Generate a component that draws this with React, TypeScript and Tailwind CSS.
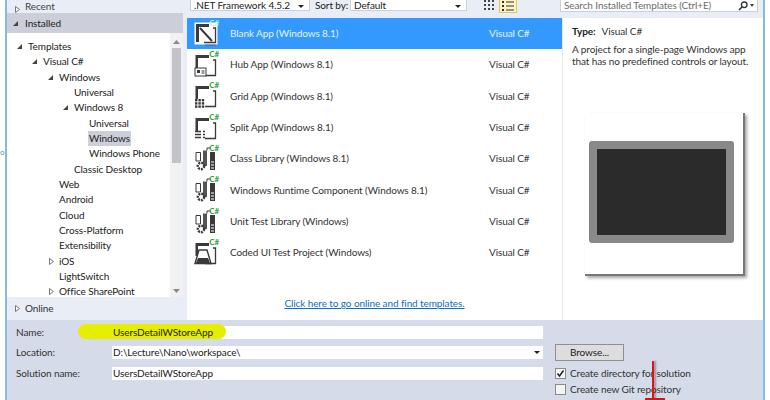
import type { ReactNode } from "react";

const FONT = "font-['Lato','Open_Sans',sans-serif]";

const tree: { label: string; indent: number; arrow?: "open" | "closed"; selected?: boolean }[] = [
  { label: "Templates", indent: 28, arrow: "open" },
  { label: "Visual C#", indent: 43, arrow: "open" },
  { label: "Windows", indent: 59, arrow: "open" },
  { label: "Universal", indent: 74 },
  { label: "Windows 8", indent: 74, arrow: "open" },
  { label: "Universal", indent: 89 },
  { label: "Windows", indent: 89, selected: true },
  { label: "Windows Phone", indent: 89 },
  { label: "Classic Desktop", indent: 74 },
  { label: "Web", indent: 59 },
  { label: "Android", indent: 59 },
  { label: "Cloud", indent: 59 },
  { label: "Cross-Platform", indent: 59 },
  { label: "Extensibility", indent: 59 },
  { label: "iOS", indent: 59, arrow: "closed" },
  { label: "LightSwitch", indent: 59 },
  { label: "Office SharePoint", indent: 59, arrow: "closed" },
];

const templates: { name: string; icon: IconKind }[] = [
  { name: "Blank App (Windows 8.1)", icon: "blank" },
  { name: "Hub App (Windows 8.1)", icon: "hub" },
  { name: "Grid App (Windows 8.1)", icon: "grid" },
  { name: "Split App (Windows 8.1)", icon: "split" },
  { name: "Class Library (Windows 8.1)", icon: "lib" },
  { name: "Windows Runtime Component (Windows 8.1)", icon: "lib" },
  { name: "Unit Test Library (Windows)", icon: "lib" },
  { name: "Coded UI Test Project (Windows)", icon: "test" },
];

type IconKind = "blank" | "hub" | "grid" | "split" | "lib" | "test";

function Arrow({ open }: { open?: boolean }) {
  return (
    <svg width="7" height="7" viewBox="0 0 7 7" className="shrink-0">
      {open ? (
        <path d="M6 1V6H1Z" fill="#444" />
      ) : (
        <path d="M1.5 .5L5.5 3.5L1.5 6.5Z" fill="#fff" stroke="#777" />
      )}
    </svg>
  );
}

function TemplateIcon({ kind, selected }: { kind: IconKind; selected?: boolean }) {
  const dark = "#3a3a3a";
  let body: ReactNode;
  if (kind === "lib") {
    body = (
      <g>
        <path d="M2 5.5H6.5V14H2Z" fill="#fff" stroke={dark} />
        <path d="M9 3.5H13V19H9Z" fill="#555" />
        <path d="M16 5H21V23H16Z" fill={dark} />
        <path d="M17 15H20M17 18H20M17 21H20" stroke="#fff" />
        <circle cx="7" cy="19" r="3.2" fill="none" stroke={dark} strokeWidth="2.4" strokeDasharray="2 1" />
        <path d="M13 3.5V1H17" fill="none" stroke={dark} />
      </g>
    );
  } else {
    body = (
      <g>
        <path d="M1.5 2H15V5H4V15H1.5Z" fill={dark} />
        <path d="M19 7H21.5V22.5H11" fill="none" stroke={dark} strokeWidth="1.3" />
        {kind === "blank" && (
          <g>
            <rect x="0.5" y="0.5" width="23" height="22" fill="#fff" />
            <path d="M2 2H15V5H5V20H2Z" fill={dark} />
            <path d="M19 6H21.5V20.5H10" fill="none" stroke={dark} strokeWidth="1.3" />
            <path d="M6 6L18 19" stroke={dark} strokeWidth="2" />
          </g>
        )}
        {kind === "hub" && (
          <g>
            <rect x="1" y="15" width="11" height="8" fill="#fff" stroke={dark} />
            <rect x="3" y="17" width="3" height="3" fill={dark} />
            <path d="M7.5 18H10.5M7.5 20H10.5" stroke={dark} />
          </g>
        )}
        {kind === "grid" && (
          <g fill={dark}>
            {[0, 1, 2].map((r) =>
              [0, 1, 2].map((c) => <rect key={`${r}${c}`} x={1 + c * 3.4} y={15 + r * 3.2} width="2.4" height="2.4" />)
            )}
          </g>
        )}
        {kind === "split" && (
          <path d="M1 15.5H7M9 15.5H11M1 18.5H7M9 18.5H11M1 21.5H7M9 21.5H11" stroke={dark} strokeWidth="1.3" />
        )}
        {kind === "test" && (
          <g>
            <path d="M5 9H13L17 22.5H1Z" fill="#fff" stroke={dark} strokeWidth="1.4" />
            <path d="M4 17H14L16 22H2Z" fill={dark} />
          </g>
        )}
      </g>
    );
  }
  return (
    <div className="relative w-[26px] h-[26px] shrink-0">
      <svg width="24" height="24" viewBox="0 0 24 24" className="mt-px">
        {body}
      </svg>
      <span className={`absolute -top-[3px] right-[1px] text-[8px] leading-[10px] font-bold ${selected ? "text-[#c8f5cc]" : "text-[#2f9e3f]"}`}>
        C#
      </span>
    </div>
  );
}

function Scrollbar() {
  return (
    <div className="w-[13px] shrink-0 bg-[#f1f1f3] flex flex-col items-center">
      <svg width="9" height="6" viewBox="0 0 9 6" className="mt-[6px] shrink-0">
        <path d="M1 5L4.5 1L8 5Z" fill="#8a8a8a" />
      </svg>
      <div className="w-[9px] h-[115px] mt-[3px] bg-[#c2c3c9]" />
      <svg width="9" height="6" viewBox="0 0 9 6" className="mt-auto mb-[3px] shrink-0">
        <path d="M1 1L4.5 5L8 1Z" fill="#8a8a8a" />
      </svg>
    </div>
  );
}

function LeftPanel() {
  return (
    <div className="w-[180px] shrink-0 flex flex-col bg-[#e9edf6] whitespace-nowrap">
      <div className="h-[13px] flex items-end pl-[7px] gap-[4px] text-[#444] overflow-hidden">
        <Arrow />
        <span className="leading-[13px]">Recent</span>
      </div>
      <div className="h-[20px] mr-[4px] bg-[#ccced9] flex items-center pl-[5px] gap-[6px] text-[#222]">
        <Arrow open />
        <span>Installed</span>
      </div>
      <div className="h-[264px] mr-[4px] flex bg-white overflow-hidden">
        <div className="flex-1 pt-[6px] overflow-hidden">
          {tree.map((t, i) => (
            <div key={i} className="relative h-[15.33px] flex items-center" style={{ paddingLeft: t.indent - 8 }}>
              {t.arrow && (
                <span className="absolute top-[4px]" style={{ left: t.indent - (t.arrow === "closed" ? 18 : 19) }}>
                  <Arrow open={t.arrow === "open"} />
                </span>
              )}
              <span className={`px-[1px] leading-[15px] text-[#222] ${t.selected ? "bg-[#ccced9]" : ""}`}>{t.label}</span>
            </div>
          ))}
        </div>
        <Scrollbar />
      </div>
      <div className="flex-1 flex items-center pl-[7px] gap-[4px] text-[#333]">
        <Arrow />
        <span>Online</span>
      </div>
    </div>
  );
}

function Toolbar() {
  return (
    <div className="h-[18px] flex items-start bg-[#e9edf6] text-[#222] whitespace-nowrap">
      <div className="ml-[3px] w-[120px] h-[11px] bg-white border border-[#ccced9] border-t-0 flex items-end justify-between pl-[3px] pr-[5px] leading-[11px]">
        <span className="-mb-px">.NET Framework 4.5.2</span>
        <span className="w-0 h-0 mb-[2px] border-x-[3px] border-x-transparent border-t-[3px] border-t-[#222]" />
      </div>
      <span className="ml-[5px] w-[31px] leading-[11px]">Sort by:</span>
      <div className="ml-[4px] w-[117px] h-[11px] bg-white border border-[#ccced9] border-t-0 flex items-end justify-between pl-[3px] pr-[5px] leading-[11px]">
        <span className="-mb-px">Default</span>
        <span className="w-0 h-0 mb-[2px] border-x-[3px] border-x-transparent border-t-[3px] border-t-[#222]" />
      </div>
      <svg width="12" height="11" viewBox="0 0 12 11" className="ml-[16px]">
        <path d="M1 0H3V2H1ZM5 0H7V2H5ZM9 0H11V2H9ZM1 4H3V6H1ZM5 4H7V6H5ZM9 4H11V6H9ZM1 8H3V10H1ZM5 8H7V10H5ZM9 8H11V10H9Z" fill="#444" />
      </svg>
      <div className="ml-[4px] w-[18px] h-[13px] bg-[#fdf4bf] border border-[#e5c365] border-t-0 flex items-center justify-center">
        <svg width="12" height="10" viewBox="0 0 12 10">
          <path d="M0 0H2V2H0ZM4 .5H12V1.5H4ZM0 4H2V6H0ZM4 4.5H12V5.5H4ZM0 8H2V10H0ZM4 8.5H12V9.5H4Z" fill="#333" />
        </svg>
      </div>
      <div className="ml-[43px] w-[198px] h-[12px] bg-white border border-[#ccced9] border-t-0 flex items-end justify-between pl-[3px] pr-[3px]">
        <span className="text-[#6d6d6d] leading-[11px]">Search Installed Templates (Ctrl+E)</span>
        <span className="flex items-center gap-[2px]">
          <svg width="10" height="10" viewBox="0 0 10 10">
            <circle cx="6.2" cy="3.8" r="2.8" fill="none" stroke="#333" strokeWidth="1.3" />
            <path d="M4 6L1 9" stroke="#333" strokeWidth="1.6" />
          </svg>
          <span className="w-0 h-0 mb-[1px] border-x-[2px] border-x-transparent border-t-[3px] border-t-[#444]" />
        </span>
      </div>
    </div>
  );
}

function TemplateList() {
  return (
    <div className="w-[375px] shrink-0 flex flex-col">
      <div className="flex-1">
        {templates.map((t, i) => (
          <div key={i} className={`h-[31.33px] flex items-center ${i === 0 ? "bg-[#3399ff] text-[#e6f2ff]" : "text-[#333]"}`}>
            <div className="w-[43px] pl-[7px] flex shrink-0">
              <TemplateIcon kind={t.icon} selected={i === 0} />
            </div>
            <span className="flex-1 whitespace-nowrap">{t.name}</span>
            <span className="w-[73px] whitespace-nowrap">Visual C#</span>
          </div>
        ))}
      </div>
      <div className="h-[26px] pt-[2px] text-center text-[#0e70c0] underline whitespace-nowrap">Click here to go online and find templates.</div>
    </div>
  );
}

function DetailPanel() {
  return (
    <div className="flex-1 border-l border-[#e3e6ee] pl-[9px] pt-[6px] text-[#333]">
      <div className="leading-[15px]">
        <span className="font-bold text-[#222]">Type:</span>
        <span className="ml-[6px]">Visual C#</span>
      </div>
      <p className="mt-[4px] leading-[12px] whitespace-nowrap">
        A project for a single-page Windows app
        <br />
        that has no predefined controls or layout.
      </p>
      {/* preview tile */}
      <div className="ml-[13px] mt-[46px] w-[160px] h-[163px] bg-white border-r-2 border-b-2 border-[#777] shadow-[2px_2px_3px_rgba(0,0,0,0.35)] pt-[28px] pl-[4px]">
        <div className="w-[145px] h-[102px] rounded-[3px] bg-[#898989] p-[8px]">
          <div className="w-full h-full bg-[#2b2b2b]" />
        </div>
      </div>
    </div>
  );
}

function Field({ label, value, dropdown }: { label: string; value: string; dropdown?: boolean }) {
  return (
    <div className="h-[20.5px] flex items-center">
      <span className="w-[105px] shrink-0 pl-[9px] text-[#333]">{label}</span>
      <div className="w-[431px] h-[13px] flex items-center justify-between pl-[1px] pr-[3px] bg-white text-[#222]">
        <span className="relative z-20 leading-[13px]">{value}</span>
        {dropdown && <span className="w-0 h-0 border-x-[3px] border-x-transparent border-t-[3px] border-t-[#222]" />}
      </div>
    </div>
  );
}

function Check({ checked, label }: { checked?: boolean; label: string }) {
  return (
    <div className="h-[16px] flex items-center gap-[4px]">
      <div className="w-[11px] h-[11px] border border-[#8a8a8a] bg-[#f4f4f4] flex items-center justify-center">
        {checked && (
          <svg width="9" height="9" viewBox="0 0 9 9">
            <path d="M1.5 4.5L3.5 7L7.5 1.5" fill="none" stroke="#222" strokeWidth="1.5" />
          </svg>
        )}
      </div>
      <span className="text-[#333] whitespace-nowrap">{label}</span>
    </div>
  );
}

export default function App() {
  return (
    <div className={`relative w-[770px] h-[400px] overflow-hidden bg-white text-[10px] tracking-[-0.1px] ${FONT}`}>
      <div className="ml-[5px] w-[760px] h-full border-x-2 border-[#85b9e6] flex flex-col">
        <div className="h-[320px] flex shrink-0">
          <LeftPanel />
          <div className="flex-1 flex flex-col min-w-0">
            <Toolbar />
            <div className="flex-1 flex bg-white min-h-0">
              <TemplateList />
              <DetailPanel />
            </div>
          </div>
        </div>
        <div className="flex-1 bg-[#d6dbe9] flex pt-[2px]">
          <div className="w-[536px] shrink-0">
            <Field label="Name:" value="UsersDetailWStoreApp" />
            <Field label="Location:" value="D:\Lecture\Nano\workspace\" dropdown />
            <Field label="Solution name:" value="UsersDetailWStoreApp" />
          </div>
          <div className="pl-[12px] pt-[22px]">
            <div className="w-[69px] h-[17px] bg-[#dddddd] border border-[#8f8f8f] flex items-center justify-center text-[#222]">
              Browse...
            </div>
            <div className="mt-[4px]">
              <Check checked label="Create directory for solution" />
              <Check label="Create new Git repository" />
            </div>
          </div>
        </div>
      </div>
      {/* highlighter and red pen marks drawn over the dialog */}
      <div className="absolute z-10 left-[78px] top-[324px] w-[148px] h-[15px] rounded-full bg-[#e6ee00]" />
      <div className="absolute z-20 left-[652px] top-[361px] w-[2px] h-[39px] bg-[#e0101a] shadow-[2px_0_2px_rgba(0,0,0,0.35)]" />
      <div className="absolute z-20 left-[645px] top-[398px] w-[20px] h-[2px] bg-[#e0101a]" />
      <span className="absolute left-0 top-[148px] text-[8px] leading-[8px] text-[#4a90d9]">o</span>
    </div>
  );
}
